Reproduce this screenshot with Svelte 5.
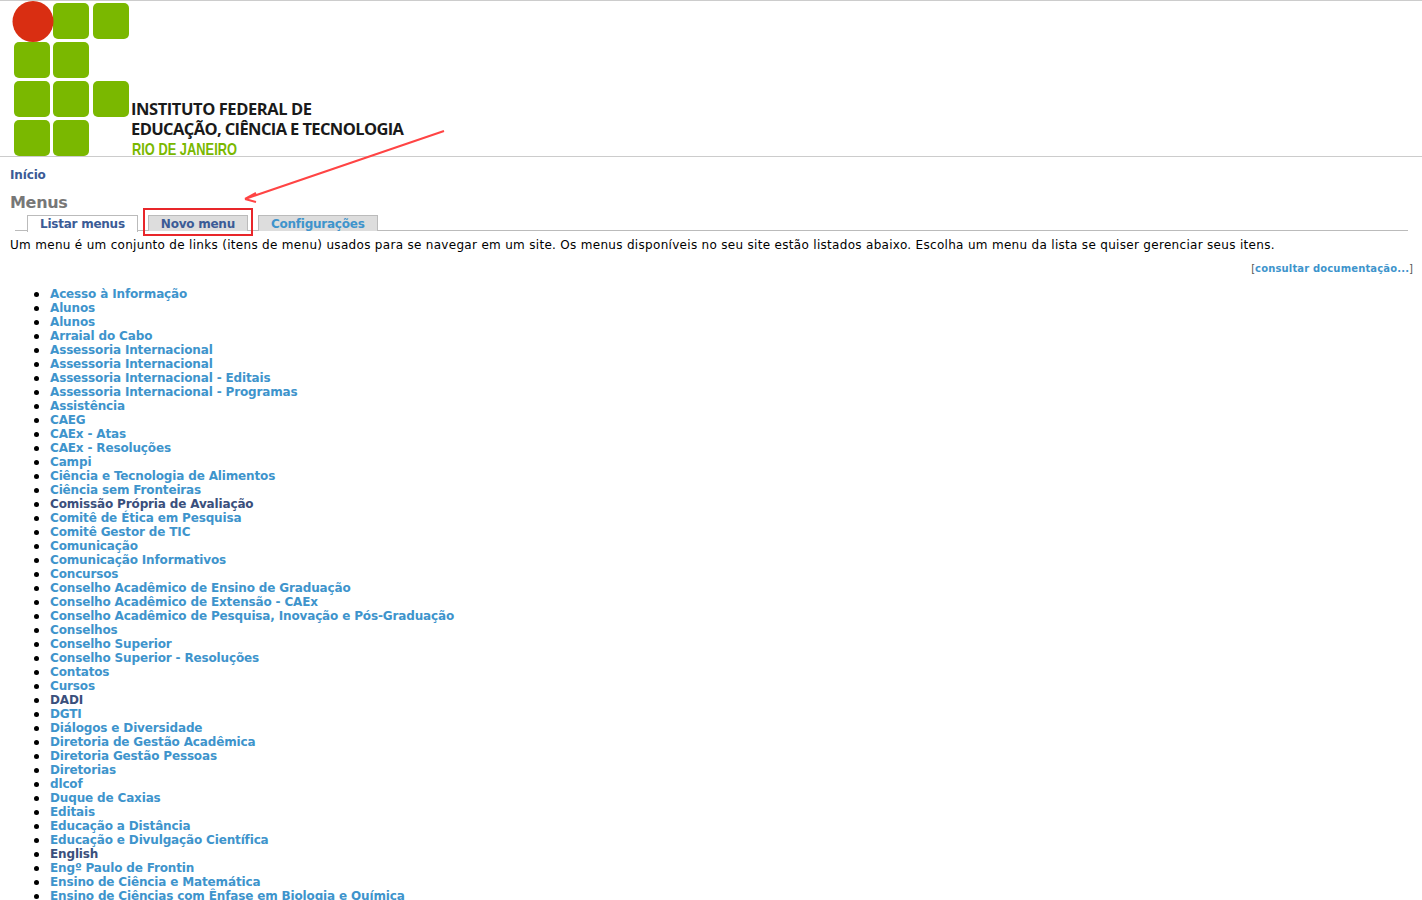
<script>
	const darkItems = ['Comissão Própria de Avaliação', 'DADI', 'English'];

	const menus = [
		'Acesso à Informação', 'Alunos', 'Alunos', 'Arraial do Cabo', 'Assessoria Internacional',
		'Assessoria Internacional', 'Assessoria Internacional - Editais', 'Assessoria Internacional - Programas',
		'Assistência', 'CAEG', 'CAEx - Atas', 'CAEx - Resoluções', 'Campi', 'Ciência e Tecnologia de Alimentos',
		'Ciência sem Fronteiras', 'Comissão Própria de Avaliação', 'Comitê de Ética em Pesquisa',
		'Comitê Gestor de TIC', 'Comunicação', 'Comunicação Informativos', 'Concursos',
		'Conselho Acadêmico de Ensino de Graduação', 'Conselho Acadêmico de Extensão - CAEx',
		'Conselho Acadêmico de Pesquisa, Inovação e Pós-Graduação', 'Conselhos', 'Conselho Superior',
		'Conselho Superior - Resoluções', 'Contatos', 'Cursos', 'DADI', 'DGTI', 'Diálogos e Diversidade',
		'Diretoria de Gestão Acadêmica', 'Diretoria Gestão Pessoas', 'Diretorias', 'dlcof', 'Duque de Caxias',
		'Editais', 'Educação a Distância', 'Educação e Divulgação Científica', 'English', 'Engº Paulo de Frontin',
		'Ensino de Ciência e Matemática', 'Ensino de Ciências com Ênfase em Biologia e Química'
	];

	// logo grid: [x, y] of each green square
	const squares = [
		[53, 3], [93, 3], [14, 42], [53, 42], [14, 81], [53, 81], [93, 81], [14, 120], [53, 120]
	];
</script>

<div class="page">
	<header class="site-header">
		<svg class="logo" width="420" height="156" viewBox="0 0 420 156">
			{#each squares as [x, y]}
				<rect {x} {y} width="36" height="36" rx="5" fill="#7ab800" />
			{/each}
			<circle cx="33" cy="21.5" r="20.5" fill="#d92e12" />
			<text x="131" y="115" class="logo-text" textLength="181">INSTITUTO FEDERAL DE</text>
			<text x="131" y="135" class="logo-text" textLength="273">EDUCAÇÃO, CIÊNCIA E TECNOLOGIA</text>
			<text x="132" y="155" class="logo-sub" textLength="105" lengthAdjust="spacingAndGlyphs">RIO DE JANEIRO</text>
		</svg>
	</header>

	<main class="content">
		<nav class="breadcrumb"><a href="#inicio">Início</a></nav>
		<h2>Menus</h2>

		<ul class="tabs">
			<li class="active"><a href="#listar">Listar menus</a></li>
			<li class="dark"><a href="#novo">Novo menu</a></li>
			<li><a href="#config">Configurações</a></li>
		</ul>

		<p class="help">Um menu é um conjunto de links (itens de menu) usados para se navegar em um site. Os menus disponíveis no seu site estão listados abaixo. Escolha um menu da lista se quiser gerenciar seus itens.</p>
		<p class="doc">[<a href="#doc">consultar documentação...</a>]</p>

		<ul class="menu-list">
			{#each menus as name}
				<li><a href="#menu" class:dark={darkItems.includes(name)}>{name}</a></li>
			{/each}
		</ul>
	</main>

	<!-- annotation drawn over the screenshot -->
	<div class="highlight"></div>
	<svg class="arrow" width="460" height="210" viewBox="0 0 460 210">
		<path d="M444 131 L245 199 M245 199 L256 193 M245 199 L256 202" fill="none" stroke="#f44" stroke-width="2" />
	</svg>
</div>

<style>
	:global(html), :global(body) {
		overflow: hidden;
	}

	:global(body) {
		background: #fff;
		color: #000;
		font-family: "DejaVu Sans", Verdana, sans-serif;
		font-size: 12px;
	}

	.page {
		position: relative;
		height: 900px;
		overflow: hidden;
	}

	.site-header {
		height: 155px;
		border-top: 1px solid #ccc;
		border-bottom: 1px solid #ccc;
	}

	.logo {
		display: block;
		margin-top: -1px;
		overflow: visible;
	}

	.logo-text {
		font-family: "Open Sans", sans-serif;
		font-weight: 700;
		font-size: 16.5px;
		fill: #1a1a1a;
	}

	.logo-sub {
		font-family: "Liberation Sans", sans-serif;
		font-weight: 700;
		font-size: 17px;
		fill: #7ab800;
	}

	.content {
		padding: 11px 10px 0;
	}

	a {
		text-decoration: none;
		color: #3e94cc;
		font-weight: 700;
		letter-spacing: -0.15px;
	}

	.breadcrumb {
		line-height: 14px;
		height: 14px;
	}

	.breadcrumb a {
		color: #3b5b96;
	}

	h2 {
		margin: 11px 0 0;
		font-size: 16px;
		line-height: 19px;
		letter-spacing: -0.3px;
		color: #777;
	}

	.tabs {
		display: flex;
		list-style: none;
		margin: 3px 4px 0 5px;
		padding: 0 0 0 12px;
		gap: 10px;
		height: 15px;
		border-bottom: 1px solid #bbb;
	}

	.tabs li a {
		display: block;
		height: 15px;
		line-height: 16px;
		padding: 0 12px;
		background: #ddd;
		border: 1px solid #bbb;
		border-bottom: none;
		letter-spacing: -0.24px;
	}

	.tabs .active a {
		background: #fff;
		color: #3b5b96;
		height: 16px;
	}

	.tabs .dark a {
		color: #3b5b96;
	}

	.help {
		margin: 6px 0 0;
		line-height: 16px;
		letter-spacing: 0.305px;
	}

	.doc {
		margin: 9px -1px 0 0;
		text-align: right;
		font-size: 10px;
		line-height: 14px;
		color: #555;
	}

	.doc a {
		letter-spacing: 0.15px;
	}

	.menu-list {
		list-style: none;
		margin: 11px 0 0;
		padding: 0 0 0 40px;
		line-height: 14px;
	}

	.menu-list li {
		position: relative;
	}

	.menu-list li::before {
		content: "";
		position: absolute;
		left: -16px;
		top: 5px;
		width: 5px;
		height: 5px;
		border-radius: 50%;
		background: #000;
	}

	.menu-list a.dark {
		color: #3a4f7c;
	}

	.highlight {
		position: absolute;
		left: 143px;
		top: 208px;
		width: 106px;
		height: 24px;
		border: 2px solid #e8262a;
	}

	.arrow {
		position: absolute;
		left: 0;
		top: 0;
	}
</style>
